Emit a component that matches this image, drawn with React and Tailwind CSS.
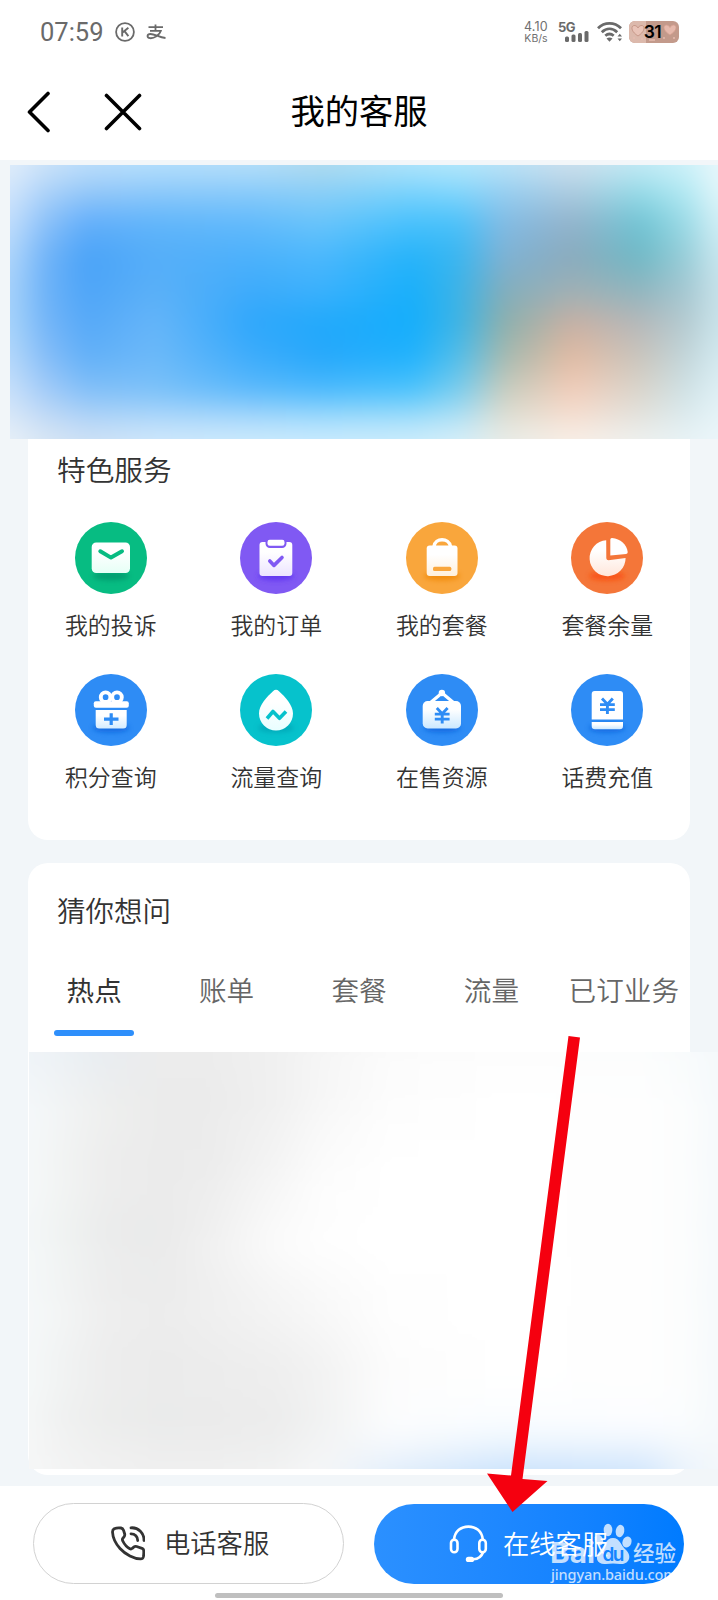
import React from 'react';

const SERVICES = [
  { id: 'complaint', name: '我的投诉', color: '#07bc82', shadow: '#04946a', tint: '#e6fff6' },
  { id: 'order', name: '我的订单', color: '#8059f3', shadow: '#5a2ff0', tint: '#ece4ff' },
  { id: 'plan', name: '我的套餐', color: '#f9a63c', shadow: '#ef8506', tint: '#fff0dc' },
  { id: 'balance', name: '套餐余量', color: '#f47639', shadow: '#fb4a10', tint: '#ffe6da' },
  { id: 'points', name: '积分查询', color: '#2e8cf5', shadow: '#0f62dc', tint: '#d4ecff' },
  { id: 'data', name: '流量查询', color: '#06c2cc', shadow: '#04a3b4', tint: '#e8feff' },
  { id: 'resource', name: '在售资源', color: '#2e8cf5', shadow: '#0f62dc', tint: '#cbe8ff' },
  { id: 'recharge', name: '话费充值', color: '#2e8cf5', shadow: '#0f62dc', tint: '#cbe8ff' },
];

const TABS = ['热点', '账单', '套餐', '流量', '已订业务'];

// Color meshes: x stops, y stops and one row of colors per y stop
const BANNER_MESH = {
  width: 708,
  height: 274,
  xs: [0, 36, 77, 146, 242, 310, 402, 448, 494, 562, 631, 677, 708],
  ys: [0, 25, 58, 92, 125, 158, 192, 225, 252, 274],
  rows: [
    ['#e0edfa', '#cbe2f9', '#bcdefa', '#b5dffc', '#b6dff9', '#b0dbee', '#b0e4fb', '#b4e8fb', '#bbe3f7', '#cde0ee', '#c2eaf5', '#cdf1f9', '#e8f7fb'],
    ['#d3e6fb', '#aed3f9', '#98c9f9', '#90cafa', '#8cccfa', '#8dcff6', '#7dd4fc', '#86d7fc', '#98d0f2', '#afcde1', '#98dce9', '#b4eaf4', '#e2f6fa'],
    ['#c2defb', '#8ac0f9', '#62aefa', '#60b5fa', '#62baFb', '#68c4fb', '#48c1fc', '#4ac1fa', '#82bbe4', '#93b3cb', '#70c4d4', '#9cdbe7', '#d2eff6'],
    ['#b0d6fb', '#70b3f8', '#4aa3f8', '#55aef9', '#4cb1fb', '#4cb8fc', '#26b3fa', '#3ab6f0', '#7fb2d4', '#8aabbd', '#6fb9c6', '#99ced9', '#c9e7ef'],
    ['#a8d2fa', '#6cb2f8', '#4ea5f8', '#5ab0f8', '#3eabfb', '#3cb1fc', '#19b0fb', '#3cb3e8', '#82aebd', '#9fb0b5', '#8fb5bf', '#a5c8d2', '#c8e2ea'],
    ['#a8d4fa', '#74b5f8', '#56a9f8', '#65b5f9', '#2fa7fb', '#22a9fb', '#15aefc', '#3cb4e6', '#8db0ac', '#c9b0a3', '#b5b8ba', '#b4cbd1', '#cae4eb'],
    ['#b5d8fa', '#85bdf8', '#62b0f8', '#6cb9f9', '#3dacfb', '#27a8fb', '#21b2fd', '#52beea', '#a6bab0', '#e2bba3', '#c9c5bd', '#c2d6db', '#d4eaf0'],
    ['#c8e0fa', '#a2cbf8', '#82bff8', '#7bc1f9', '#5bb9fb', '#4cb9fc', '#4cc3fc', '#7acdee', '#c8cdbf', '#f2cdba', '#d9d5cc', '#cfe2e6', '#dff0f5'],
    ['#d9e8f8', '#c2daf6', '#b0d3f7', '#aed7fa', '#a6d7fb', '#9edafc', '#a0ddfa', '#b0e1f5', '#dfdfd4', '#f6dfd1', '#e3e3de', '#dcebef', '#e6f4f8'],
    ['#e8f0f8', '#d8e6f4', '#cee1f5', '#d0e8fb', '#cdebfd', '#cbebfe', '#cdedfc', '#d7eff9', '#e9ede8', '#f9efe7', '#eef1ef', '#e8f3f6', '#ecf6fa'],
  ],
};

const LIST_MESH = {
  width: 689,
  height: 417,
  xs: [0, 31, 77, 132, 178, 246, 292, 361, 475, 612, 658, 689],
  ys: [0, 55, 121, 188, 255, 321, 372, 405, 417],
  rows: [
    ['#eff3f7', '#ecf1f5', '#e8ecf0', '#ececec', '#ececec', '#f0f0f0', '#f5f5f5', '#fbfbfb', '#fdfdfd', '#fcfdfd', '#f8fbfc', '#f4f8fb'],
    ['#f4f8fa', '#f2f4f5', '#eeefee', '#ebebeb', '#ebebeb', '#f0f0f0', '#f7f7f7', '#fdfdfd', '#ffffff', '#fefefe', '#fcfdfd', '#f5f9fb'],
    ['#f5f8f9', '#f2f4f3', '#ededed', '#ebebeb', '#ececec', '#f5f5f5', '#fcfcfc', '#ffffff', '#ffffff', '#fefefe', '#fcfdfd', '#f5f9fb'],
    ['#f4f7f8', '#f0f3f2', '#ebecec', '#eaeaea', '#f0f0f0', '#fbfbfb', '#fefefe', '#ffffff', '#ffffff', '#fefefe', '#fcfdfd', '#f5f9fb'],
    ['#f5f8f9', '#f3f5f5', '#eeeeee', '#ececec', '#efefef', '#f4f4f4', '#f8f8f8', '#fefefe', '#ffffff', '#fefefe', '#fcfdfd', '#f5f9fb'],
    ['#f5f8f8', '#f1f3f3', '#ededed', '#ebebeb', '#ececec', '#eeeeee', '#f2f2f2', '#fcfcfc', '#ffffff', '#fefefe', '#fcfdfd', '#f5f9fb'],
    ['#f5f7f7', '#f0f1f1', '#ecedec', '#eaebeb', '#ebebeb', '#ececec', '#f1f2f2', '#fcfdfe', '#fafdff', '#fcfdff', '#fbfdfe', '#f5f9fb'],
    ['#f6f7f7', '#f3f3f3', '#f0f0f0', '#eeeeee', '#eeeeee', '#eff0f0', '#f4f5f6', '#eff5fc', '#dfeefd', '#e2effd', '#f0f6fc', '#f4f8fb'],
    ['#f6f7f7', '#f3f4f4', '#f1f1f1', '#f0f0f0', '#f0f0f0', '#f2f2f2', '#f6f7f8', '#e2eefb', '#cae2fc', '#d0e5fc', '#ecf4fc', '#f3f7fb'],
  ],
};

// Soft picture built from horizontal gradients that fade into each other
function ColorMesh({ id, mesh, blur }) {
  const { width, height, xs, ys, rows } = mesh;
  return (
    <svg viewBox={`0 0 ${width} ${height}`} className="block w-full h-full overflow-hidden">
      <defs>
        <linearGradient id={`${id}-fade`} x1="0" y1="0" x2="0" y2="1">
          <stop offset="0" stopColor="#fff" stopOpacity="1" />
          <stop offset="1" stopColor="#fff" stopOpacity="0" />
        </linearGradient>
        <mask id={`${id}-mask`} maskContentUnits="objectBoundingBox" x="0" y="0" width="1" height="1" style={{ maskType: 'alpha' }}>
          <rect width="1" height="1" fill={`url(#${id}-fade)`} />
        </mask>
        <filter id={`${id}-blur`} filterUnits="userSpaceOnUse" x="-40" y="-40" width={width + 80} height={height + 80} colorInterpolationFilters="sRGB">
          <feGaussianBlur stdDeviation={blur} />
        </filter>
        {rows.map((row, i) => (
          <linearGradient key={i} id={`${id}-row-${i}`} gradientUnits="userSpaceOnUse" x1="0" y1="0" x2={width} y2="0">
            {row.map((color, j) => (
              <stop key={j} offset={xs[j] / width} stopColor={color} />
            ))}
          </linearGradient>
        ))}
      </defs>
      <g filter={`url(#${id}-blur)`}>
        <rect x="-40" y="-40" width={width + 80} height="42" fill={`url(#${id}-row-0)`} />
        <rect x="-40" y={height - 2} width={width + 80} height="42" fill={`url(#${id}-row-${rows.length - 1})`} />
        {ys.slice(0, -1).map((y, i) => {
          const box = { x: -40, y, width: width + 80, height: ys[i + 1] - y };
          return (
            <g key={i}>
              <rect {...box} fill={`url(#${id}-row-${i + 1})`} />
              <rect {...box} fill={`url(#${id}-row-${i})`} mask={`url(#${id}-mask)`} />
            </g>
          );
        })}
      </g>
    </svg>
  );
}

function Yuan({ x, y, color }) {
  return (
    <path
      transform={`translate(${x} ${y})`}
      d="M-5.4 -7.4L0 -1.8L5.4 -7.4M0 -1.8V8M-7.4 -1.4H7.4M-7.4 3.6H7.4"
      fill="none"
      stroke={color}
      strokeWidth="2.9"
    />
  );
}

function ServiceGlyph({ id, color, fill }) {
  const line = { fill: 'none', stroke: color, strokeWidth: 3.6, strokeLinecap: 'round', strokeLinejoin: 'round' };
  switch (id) {
    case 'complaint':
      return (
        <>
          <rect x="16.7" y="20.4" width="38.3" height="30.6" rx="4.5" fill={fill} />
          <path d="M25.3 29.3L36 35.6L47 29.3" {...line} strokeWidth="4" />
        </>
      );
    case 'order':
      return (
        <>
          <rect x="19.5" y="20" width="32.8" height="34" rx="3" fill={fill} />
          <rect x="27.5" y="18" width="17" height="6" rx="2.4" fill={color} stroke={color} strokeWidth="4" />
          <rect x="27.5" y="17.8" width="17" height="6" rx="2.2" fill="#fff" />
          <path d="M29.8 39L34 43.4L42 35.5" {...line} />
        </>
      );
    case 'plan':
      return (
        <>
          <path d="M28 24.5C29 15.5 43 15.5 44.5 24.5" fill="none" stroke="#fff" strokeWidth="3.4" />
          <rect x="20.7" y="23.5" width="30.8" height="30.5" rx="3" fill={fill} />
          <rect x="27" y="44.7" width="18.3" height="4.3" rx="1.6" fill={color} />
        </>
      );
    case 'balance':
      return (
        <>
          <path d="M35.2 18.2A18 18 0 1 0 54.6 36L37.5 38.2Q35.5 38.2 35.3 36.2Z" fill={fill} />
          <path d="M39.3 17.5Q39.3 15.8 41 15.9C49.5 16.5 55.8 22.5 56.7 30Q56.9 31.7 55.2 31.9L39.3 33.5Z" fill="#fff" />
        </>
      );
    case 'points':
      return (
        <>
          <circle cx="30.6" cy="23.2" r="4.8" fill="none" stroke="#fff" strokeWidth="3.9" />
          <circle cx="42" cy="23.2" r="4.8" fill="none" stroke="#fff" strokeWidth="3.9" />
          <rect x="18.8" y="27.3" width="35" height="6.4" rx="2" fill="#fff" />
          <path d="M20.7 36H51.7V51Q51.7 54.5 48.2 54.5H24.2Q20.7 54.5 20.7 51Z" fill={fill} />
          <path d="M36.2 39.3V51M29 45.2H43.5" {...line} strokeWidth="3.2" strokeLinecap="butt" />
        </>
      );
    case 'data':
      return (
        <>
          <path d="M33 17.2Q36 14.5 39 17.2C45 22.5 53 31 53 39.5A17 17 0 0 1 19 39.5C19 31 27 22.5 33 17.2Z" fill={fill} />
          <path d="M27 44.5L33 37.5L39.5 44.3L46 37.5" {...line} strokeLinecap="butt" />
        </>
      );
    case 'resource':
      return (
        <>
          <path d="M36 19L24 29H48Z" fill="none" stroke="#fff" strokeWidth="3.2" strokeLinejoin="round" />
          <circle cx="35.9" cy="19" r="3.2" fill="#fff" />
          <rect x="16.7" y="27" width="38.3" height="27.5" rx="5" fill={fill} />
          <Yuan x={36.2} y={41.5} color={color} />
        </>
      );
    default:
      return (
        <>
          <path d="M20.7 20Q20.7 17 23.7 17H49Q52 17 52 20V45.5H20.7Z" fill="#fff" />
          <path d="M20.7 48H52V52Q52 55.3 48.7 55.3H24Q20.7 55.3 20.7 52Z" fill={fill} />
          <Yuan x={36.4} y={32} color={color} />
        </>
      );
  }
}

function ServiceIcon({ id, color, shadow, tint }) {
  return (
    <svg viewBox="0 0 72 72" className="w-[72px] h-[72px] overflow-visible">
      <defs>
        <linearGradient id={`fill-${id}`} x1="0" y1="0" x2="0" y2="1">
          <stop offset="0.3" stopColor="#fff" />
          <stop offset="1" stopColor={tint} />
        </linearGradient>
        <filter id={`soft-${id}`} x="-50%" y="-100%" width="200%" height="300%">
          <feGaussianBlur stdDeviation="2.5" />
        </filter>
      </defs>
      <circle cx="36" cy="36" r="36" fill={color} />
      <ellipse cx="36" cy="54" rx="18" ry="4.5" fill={shadow} opacity="0.75" filter={`url(#soft-${id})`} />
      <ServiceGlyph id={id} color={color} fill={`url(#fill-${id})`} />
    </svg>
  );
}

function Battery() {
  return (
    <div className="relative w-[50px] h-[22px] rounded-[6px] overflow-hidden bg-[#c39a8b] flex items-center justify-center">
      <svg viewBox="0 0 50 22" className="absolute inset-0 w-full h-full">
        <rect width="17" height="22" fill="#dcb9ac" />
        <path d="M9 15C1 10 2 4 6 4.5Q8 4.8 9 7Q10 4.8 12 4.5C16 4 17 10 9 15Z" fill="#e9c3b7" stroke="#c08f80" strokeWidth="0.8" />
        <path d="M41 14C33 9 34 3.5 38 4Q40 4.3 41 6.5Q42 4.3 44 4C48 3.5 49 9 41 14Z" fill="#e6b9ac" stroke="#d59f91" strokeWidth="0.8" />
        <path d="M4 17h2M12 18h2M34 17h2M44 17h2M20 19h6" stroke="#e6bcb0" strokeWidth="1.5" />
      </svg>
      <span className="relative font-['Inter'] font-semibold text-[17.5px] leading-none tracking-[-0.5px] text-black pr-[3px]">31</span>
    </div>
  );
}

function StatusBar() {
  return (
    <div className="h-[64px] pl-[40px] pr-[39px] flex items-center text-[#6a6a6a] font-normal">
      <span className="font-['Roboto'] text-[25.5px] leading-none w-[75px] pt-px">07:59</span>
      <svg viewBox="0 0 20 20" className="w-5 h-5" fill="none" stroke="currentColor">
        <circle cx="10" cy="10" r="8.9" strokeWidth="1.8" />
        <path d="M7.2 5.6V14.4M13.4 5.8L7.5 10.5M9.5 9.2L13.4 14.2" strokeWidth="1.9" />
      </svg>
      <svg viewBox="0 0 20 16" className="w-5 h-4 ml-[11px]" fill="none" stroke="currentColor" strokeWidth="1.8">
        <path d="M9.5 0.5V6M2.5 3.2H17M4 6.9H14.8C13.5 11 8 14.6 4 14.2C0.5 13.8 0.8 10 4.5 10C9 10 13 13.5 19.5 14" />
      </svg>
      <div className="ml-auto flex items-center">
        <div className="font-['Inter'] text-[#707070] text-center w-[26px] mr-[9px] whitespace-nowrap">
          <div className="text-[12.5px] leading-[12px] tracking-[0.2px]">4.10</div>
          <div className="text-[10.5px] leading-[11px]">KB/s</div>
        </div>
        <div className="relative w-[31px] h-[22px] mr-[8px]">
          <span className="absolute left-0 top-0 font-['Inter'] font-bold text-[13px] leading-[12px] tracking-[-0.5px]">5G</span>
          <svg viewBox="0 0 31 22" className="w-[31px] h-[22px]" fill="currentColor">
            <rect x="7" y="15.5" width="4" height="5.5" rx="1.5" />
            <rect x="13.5" y="13.5" width="4" height="7.5" rx="1.5" />
            <rect x="20" y="12" width="4" height="9" rx="1.5" />
            <rect x="26.5" y="10" width="4" height="11" rx="1.5" />
          </svg>
        </div>
        <svg viewBox="0 0 26 22" className="w-[26px] h-[22px] mr-[6px]" fill="none" stroke="currentColor" strokeWidth="2.8">
          <path d="M1 7.2C7.5 0.8 17.5 0.8 24 7.2" />
          <path d="M4.8 11.2C9.5 6.8 15.5 6.8 20.2 11.2" />
          <path d="M8.3 14.8C11 12.4 14 12.4 16.7 14.8" />
          <path d="M9.5 17.5Q12.5 15.5 15.5 17.5L12.5 20.8Z" fill="currentColor" stroke="none" />
          <path d="M20.5 15.5L22.8 12.8L25 15.5ZM20.5 17.5L22.8 20.2L25 17.5Z" fill="currentColor" stroke="none" />
        </svg>
        <Battery />
      </div>
    </div>
  );
}

function NavBar() {
  return (
    <div className="h-[96px] flex items-center">
      <div className="flex-1 flex items-center gap-[53px]">
        <svg viewBox="0 0 25 42" className="ml-[26px] w-[25px] h-[42px]" fill="none" stroke="#000" strokeWidth="3.6" strokeLinecap="round" strokeLinejoin="round">
          <path d="M22 2.5L3.5 21L22 39.5" />
        </svg>
        <svg viewBox="0 0 38 38" className="w-[38px] h-[38px]" fill="none" stroke="#000" strokeWidth="3.6" strokeLinecap="round">
          <path d="M2.5 2.5L35.5 35.5M35.5 2.5L2.5 35.5" />
        </svg>
      </div>
      <h1 className="pb-[5px] text-[34.3px] leading-none text-black font-normal">我的客服</h1>
      <div className="flex-1" />
    </div>
  );
}

function ServiceCard() {
  return (
    <section className="mx-7 h-[401px] bg-white rounded-b-[20px]">
      <h2 className="pl-[29px] pt-[15px] text-[28.7px] leading-[29px] text-[#333]">特色服务</h2>
      <div className="mt-[39px] grid grid-cols-4 gap-y-[38px]">
        {SERVICES.map((service) => (
          <div key={service.id} className="h-[114px] flex flex-col items-center">
            <ServiceIcon {...service} />
            <span className="mt-[19px] text-[22.9px] leading-[23px] text-[#333]">{service.name}</span>
          </div>
        ))}
      </div>
    </section>
  );
}

function QuestionCard() {
  return (
    <section className="mx-7 mt-[23px] h-[612px] bg-white rounded-[20px]">
      <h2 className="pl-[29px] pt-[32px] text-[28.5px] leading-[29px] text-[#333]">猜你想问</h2>
      <div className="mt-[36px] h-[92px] grid grid-cols-5">
        {TABS.map((tab, i) => (
          <div key={tab} className="flex flex-col items-center">
            <span className={`text-[27.6px] leading-[58px] whitespace-nowrap ${i === 0 ? 'text-[#333] font-normal' : 'text-[#666]'}`}>{tab}</span>
            {i === 0 && <span className="mt-[12px] w-[80px] h-[6px] rounded-[3px] bg-[#2e8ffb]" />}
          </div>
        ))}
      </div>
      <div className="ml-px w-[689px] h-[417px]">
        <ColorMesh id="list" mesh={LIST_MESH} blur={12} />
      </div>
    </section>
  );
}

function Watermark() {
  return (
    <div className="absolute left-[550px] top-[1522px] text-white/75">
      <svg viewBox="0 0 130 64" className="w-[130px] h-[64px]" fill="currentColor">
        <text x="0" y="41" fontFamily="Inter, sans-serif" fontWeight="700" fontSize="29" textLength="45" lengthAdjust="spacingAndGlyphs">Bai</text>
        <ellipse cx="58" cy="8" rx="4.3" ry="6.2" />
        <ellipse cx="70" cy="9" rx="4.3" ry="6.2" transform="rotate(12 70 9)" />
        <ellipse cx="49" cy="18" rx="4" ry="5.5" transform="rotate(-20 49 18)" />
        <ellipse cx="77" cy="20" rx="4.5" ry="5.6" transform="rotate(20 77 20)" />
        <path d="M63 16C70 16 71 24 76 28C83 35 78 43 70 42Q63 41 56 42C47 43 44 35 50 29C55 24 56 16 63 16Z" />
        <text x="52.500" y="39" fontFamily="Inter, sans-serif" fontWeight="600" fontSize="19" fill="#1484ff" textLength="22">du</text>
        <text x="83" y="39" fontFamily="Noto Sans CJK SC, sans-serif" fontWeight="500" fontSize="21.5">经验</text>
        <text x="1" y="57.5" fontFamily="Noto Sans, sans-serif" fontWeight="500" fontSize="14.5" textLength="126" lengthAdjust="spacing">jingyan.baidu.com</text>
      </svg>
    </div>
  );
}

function Footer() {
  return (
    <footer className="mt-[11px] h-[114px] bg-white flex flex-col items-center">
      <div className="w-full mt-[17px] pl-[33px] pr-[34px] flex justify-between">
        <button className="w-[311px] h-[81px] rounded-full border border-[#d2d2d2] flex items-center pl-[77px] text-[#333]">
          <svg viewBox="0 0 34 35" className="w-[34px] h-[35px]" fill="none" stroke="currentColor" strokeWidth="2.8" strokeLinecap="round" strokeLinejoin="round">
            <path d="M3.2 2.8Q6 1.5 10 2Q11.8 2.3 12.5 4.2L13.7 8Q14 9.5 13 10.8L11.8 12.3Q11 13.5 11.8 15C13.5 18.5 15.5 21 18.8 22.7Q20.2 23.4 21.3 22.3L23 20.9Q24.2 20 25.6 20.5L31 22.3Q32.6 23 32.7 24.5Q33 28 32.3 31Q31.8 32.9 29.8 32.9C23 33 14.5 28.5 9 22.5C4.5 17.5 1.8 11.5 1.5 6Q1.5 3.8 3.2 2.8Z" />
            <path d="M20 1.8C27.5 1.3 33.2 7 33 14.5" />
            <path d="M20 7.8C24 7.8 26.8 10.5 26.7 14.5" />
          </svg>
          <span className="ml-[19px] pb-[2px] text-[26.3px] leading-none">电话客服</span>
        </button>
        <button className="w-[310px] h-[80px] mt-px rounded-full bg-linear-to-r from-[#2b90ff] to-[#007bff] flex items-center pl-[75px] text-white">
          <svg viewBox="0 0 39 38" className="w-[39px] h-[38px]" fill="none" stroke="currentColor" strokeWidth="2.6" strokeLinecap="round">
            <rect x="2" y="14.8" width="6.5" height="12.5" rx="3.2" />
            <rect x="30.3" y="14.8" width="6.5" height="12.5" rx="3.2" />
            <path d="M5 14.5C6 6 12 1.6 19.4 1.6C26.8 1.6 32.8 6 33.8 14.5" />
            <path d="M34 27.5C32.5 31.5 29.5 34 24.5 34.2" />
            <path d="M19.5 34.4H22.5" strokeWidth="5.4" />
          </svg>
          <span className="ml-[15px] pb-[2px] text-[26.3px] leading-none">在线客服</span>
        </button>
      </div>
      <div className="mt-[9px] w-[288px] h-[5px] rounded-full bg-[#bfbfbf]" />
    </footer>
  );
}

export default function App() {
  return (
    <div className="relative w-[718px] h-[1600px] overflow-hidden bg-[#f2f6f9] font-['Noto_Sans_CJK_SC',sans-serif] font-[350]">
      <header className="h-[160px] bg-white">
        <StatusBar />
        <NavBar />
      </header>
      <div className="mt-[5px] ml-[10px] h-[274px]">
        <ColorMesh id="banner" mesh={BANNER_MESH} blur={11} />
      </div>
      <ServiceCard />
      <QuestionCard />
      <Footer />
      <Watermark />

      {/* Pointer to the online service button */}
      <svg viewBox="0 0 100 480" className="absolute left-[484px] top-[1034px] w-[100px] h-[480px]">
        <path d="M84.5 2L96 3.5L38.5 445L63.5 447L28.5 478L3 439.5L27 441.5Z" fill="#f5000f" />
      </svg>
    </div>
  );
}
